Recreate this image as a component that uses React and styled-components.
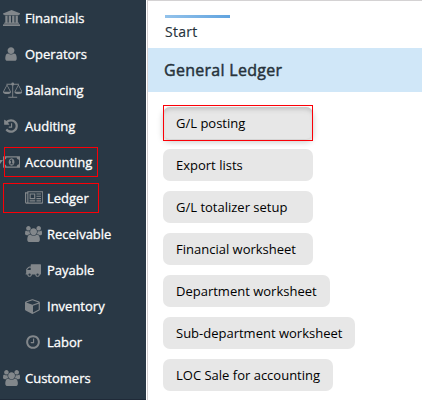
import React from 'react';
import styled, { createGlobalStyle } from 'styled-components';

const GlobalStyle = createGlobalStyle`
  * { box-sizing: border-box; }
  body { margin: 0; background: #fff; font-family: "Open Sans", sans-serif; overflow: hidden; }
`;

const Page = styled.div`
  display: flex;
  width: 422px;
  height: 400px;
  overflow: hidden;
`;

const Sidebar = styled.nav`
  position: relative;
  flex: none;
  width: 146px;
  height: 400px;
  background: #293845;
  border-bottom: 1px solid #1f2a38;
  overflow: hidden;
`;

const NavItem = styled.a`
  display: flex;
  align-items: center;
  height: 36px;
  padding-left: ${(p) => (p.$nested ? 25 : 3)}px;
  color: #fff;
  font-size: 13px;
  font-weight: 400;
  line-height: 18px;
  white-space: nowrap;
`;

const IconSlot = styled.span`
  display: flex;
  flex: none;
  align-items: center;
  width: 22px;
  height: 18px;
  color: #82878b;
`;

const Label = styled.span`
  -webkit-text-stroke: 0.3px #fff;
`;

const Highlight = styled.span`
  position: absolute;
  left: ${(p) => p.$x}px;
  top: ${(p) => p.$y}px;
  width: ${(p) => p.$w}px;
  height: ${(p) => p.$h}px;
  border: 1px solid #fb0007;
  pointer-events: none;
`;

const Caret = styled.span`
  position: absolute;
  left: -3px;
  top: 160px;
  border: 3px solid transparent;
  border-top: 4px solid #80868b;
`;

const Main = styled.main`
  flex: 1;
  height: 400px;
  margin-left: 1px;
  border-top: 1px solid #d4d2d3;
  border-left: 1px solid #d4cfd0;
  background: #fff;
`;

const TabBar = styled.div`
  height: 47px;
  padding: 14px 0 0 17px;
`;

const Tab = styled.div`
  width: 65px;
  border-top: 3px solid;
  border-image: linear-gradient(90deg, #94c3eb, #60a3df) 1;
  padding-top: 4px;
  color: #26323b;
  font-size: 14px;
  line-height: 19px;
  letter-spacing: 0.3px;
  -webkit-text-stroke: 0.15px #26323b;
`;

const Heading = styled.h1`
  display: flex;
  align-items: center;
  height: 44px;
  margin: 0;
  padding: 0 0 1px 16px;
  background: #d0e7f8;
  color: #26323b;
  font-size: 16px;
  font-weight: 400;
  letter-spacing: 0.28px;
  -webkit-text-stroke: 0.45px #26323b;
`;

const Actions = styled.div`
  display: flex;
  flex-direction: column;
  align-items: flex-start;
  gap: 10px;
  padding: 15px 0 0 15px;
`;

const Action = styled.button`
  position: relative;
  height: 32px;
  min-width: 150px;
  padding: 0 13px;
  border: 0;
  border-radius: 7px;
  background: #e7e7e7;
  color: #000;
  font: 400 13px/18px "Open Sans", sans-serif;
  letter-spacing: 0;
  text-align: left;
  white-space: nowrap;
  box-shadow: ${(p) => (p.$active ? 'inset 0 4px 5px -2px #bdbdbd, 0 3px 6px rgba(0,0,0,.22)' : 'none')};
`;

const Glyph = styled.svg`
  display: block;
  flex: none;
  fill: currentColor;
`;

const icons = {
  bank: { w: 1920, d: 'M960 0l960 384v128h-128q0 26-20.5 45t-48.5 19h-1526q-28 0-48.5-19t-20.5-45h-128v-128zM256 640h256v768h128v-768h256v768h128v-768h256v768h128v-768h256v768h59q28 0 48.5 19t20.5 45v64h-1664v-64q0-26 20.5-45t48.5-19h59zM1851 1600q28 0 48.5 19t20.5 45v128h-1920v-128q0-26 20.5-45t48.5-19z' },
  user: { w: 1792, d: 'M1536 1399q0 109-62.5 187t-150.5 78h-854q-88 0-150.5-78t-62.5-187q0-85 8.5-160.5t31.5-152 58.5-131 94-89 134.5-34.5q131 128 313 128t313-128q76 0 134.5 34.5t94 89 58.5 131 31.5 152 8.5 160.5zm-256-887q0 159-112.5 271.5t-271.5 112.5-271.5-112.5-112.5-271.5 112.5-271.5 271.5-112.5 271.5 112.5 112.5 271.5z' },
  scale: { w: 2176, d: 'M384 192h540q20-128 164-128t164 128h540v110h-540q-20 70-112 90v1270h448v110h-1000v-110h448v-1270q-92-20-112-90h-540zM448 256l448 832q0 256-448 256t-448-256zM448 420l-350 668h700zM1728 256l448 832q0 256-448 256t-448-256zM1728 420l-350 668h700z' },
  history: { w: 1792, d: 'M1664 896q0 156-61 298t-164 245-245 164-298 61q-172 0-327-72.5t-264-204.5q-7-10-6.5-22.5t8.5-20.5l137-138q10-9 25-9 16 2 23 12 73 95 179 147t225 52q104 0 198.5-40.5t163.5-109.5 109.5-163.5 40.5-198.5-40.5-198.5-109.5-163.5-163.5-109.5-198.5-40.5q-98 0-188 35.5t-160 101.5l137 138q31 30 14 69-17 40-59 40h-448q-26 0-45-19t-19-45v-448q0-42 40-59 39-17 69 14l130 129q107-101 244.5-156.5t284.5-55.5q156 0 298 61t245 164 164 245 61 298zm-640-288v448q0 14-9 23t-23 9h-320q-14 0-23-9t-9-23v-64q0-14 9-23t23-9h224v-352q0-14 9-23t23-9h64q14 0 23 9t9 23z' },
  money: { w: 1920, d: 'M768 1152h384v-96h-128v-448h-114l-148 137 77 80q42-37 55-57h2v288h-128v96zm512-256q0 70-21 142t-59.5 134-101.5 101-138 39-138-39-101.5-101-59.5-134-21-142 21-142 59.5-134 101.5-101 138-39 138 39 101.5 101 59.5 134 21 142zm512 256v-512q-106 0-181-75t-75-181h-1152q0 106-75 181t-181 75v512q106 0 181 75t75 181h1152q0-106 75-181t181-75zm128-832v1152q0 26-19 45t-45 19h-1792q-26 0-45-19t-19-45v-1152q0-26 19-45t45-19h1792q26 0 45 19t19 45z' },
  news: { w: 2048, d: 'M1024 512h-384v384h384v-384zm128 640v128h-640v-128h640zm0-768v640h-640v-640h640zm640 768v128h-512v-128h512zm0-256v128h-512v-128h512zm0-256v128h-512v-128h512zm0-256v128h-512v-128h512zm-1536 960v-960h-128v960q0 26 19 45t45 19 45-19 19-45zm1664 0v-1088h-1536v1088q0 33-11 64h1483q26 0 45-19t19-45zm128-1216v1216q0 80-56 136t-136 56h-1664q-80 0-136-56t-56-136v-1088h256v-128h1792z' },
  users: { w: 1920, d: 'M593 896q-162 5-265 128h-134q-82 0-138-40.5t-56-118.5q0-353 124-353 6 0 43.5 21t97.5 42.5 119 21.5q67 0 133-23-5 37-5 66 0 143 81 256zM1664 1533q0 120-73 189.5t-194 69.5h-874q-121 0-194-69.5t-73-189.5q0-53 3.5-103.5t14-109 26.5-108.5 43-97.5 62-81 85.5-53.5 111.5-20q10 0 43 21.5t73 48 107 48 135 21.5 135-21.5 107-48 73-48 43-21.5q61 0 111.5 20t85.5 53.5 62 81 43 97.5 26.5 108.5 14 109 3.5 103.5zM640 256q0 106-75 181t-181 75-181-75-75-181 75-181 181-75 181 75 75 181zM1344 640q0 159-112.5 271.5t-271.5 112.5-271.5-112.5-112.5-271.5 112.5-271.5 271.5-112.5 271.5 112.5 112.5 271.5zM1920 865q0 78-56 118.5t-138 40.5h-134q-103-123-265-128 81-113 81-256 0-29-5-66 66 23 133 23 59 0 119-21.5t97.5-42.5 43.5-21q124 0 124 353zM1792 256q0 106-75 181t-181 75-181-75-75-181 75-181 181-75 181 75 75 181z' },
  truck: { w: 1792, d: 'M640 1408q0-52-38-90t-90-38-90 38-38 90 38 90 90 38 90-38 38-90zm-384-512h384v-256h-158q-13 0-22 9l-195 195q-9 9-9 22v30zm1280 512q0-52-38-90t-90-38-90 38-38 90 38 90 90 38 90-38 38-90zm256-1088v1024q0 15-4 26.5t-13.5 18.5-16.5 11.5-23.5 6-22.5 2-25.5 0-22.5-.5q0 106-75 181t-181 75-181-75-75-181h-384q0 106-75 181t-181 75-181-75-75-181h-64q-3 0-22.5.5t-25.5 0-22.5-2-23.5-6-16.5-11.5-13.5-18.5-4-26.5q0-26 19-45t45-19v-320q0-8-.5-35t0-38 2.5-34.5 6.5-37 14-30.5 22.5-30l198-198q19-19 50.5-32t58.5-13h160v-192q0-26 19-45t45-19h1024q26 0 45 19t19 45z' },
  cube: { w: 1664, d: 'M896 1629l640-349v-636l-640 233v752zm-64-865l698-254-698-254-698 254zm832-252v768q0 35-18 65t-49 47l-704 384q-28 16-61 16t-61-16l-704-384q-31-17-49-47t-18-65v-768q0-40 23-73t61-47l704-256q22-8 44-8t44 8l704 256q38 14 61 47t23 73z' },
  clock: { w: 1792, d: 'M1024 544v448q0 14-9 23t-23 9h-320q-14 0-23-9t-9-23v-64q0-14 9-23t23-9h224v-352q0-14 9-23t23-9h64q14 0 23 9t9 23zm416 352q0-148-73-273t-198-198-273-73-273 73-198 198-73 273 73 273 198 198 273 73 273-73 198-198 73-273zm224 0q0 209-103 385.5t-279.5 279.5-385.5 103-385.5-103-279.5-279.5-103-385.5 103-385.5 279.5-279.5 385.5-103 385.5 103 279.5 279.5 103 385.5z' },
};

function Icon({ name }) {
  const { w, d } = icons[name];
  return (
    <Glyph width={(w / 1792) * 16} height={16} viewBox={`0 0 ${w} 1792`}>
      <path d={d} fillRule="evenodd" />
    </Glyph>
  );
}

const navigation = [
  { label: 'Financials', icon: 'bank' },
  { label: 'Operators', icon: 'user' },
  { label: 'Balancing', icon: 'scale' },
  { label: 'Auditing', icon: 'history' },
  { label: 'Accounting', icon: 'money' },
  { label: 'Ledger', icon: 'news', nested: true },
  { label: 'Receivable', icon: 'users', nested: true },
  { label: 'Payable', icon: 'truck', nested: true },
  { label: 'Inventory', icon: 'cube', nested: true },
  { label: 'Labor', icon: 'clock', nested: true },
  { label: 'Customers', icon: 'users' },
];

const actions = [
  'G/L posting',
  'Export lists',
  'G/L totalizer setup',
  'Financial worksheet',
  'Department worksheet',
  'Sub-department worksheet',
  'LOC Sale for accounting',
];

export default function App() {
  return (
    <Page>
      <GlobalStyle />
      <Sidebar>
        {navigation.map((item) => (
          <NavItem key={item.label} $nested={item.nested}>
            <IconSlot><Icon name={item.icon} /></IconSlot>
            <Label>{item.label}</Label>
          </NavItem>
        ))}
        <Caret />
        <Highlight $x={4} $y={147} $w={94} $h={30} />
        <Highlight $x={3} $y={183} $w={96} $h={30} />
      </Sidebar>
      <Main>
        <TabBar><Tab>Start</Tab></TabBar>
        <Heading>General Ledger</Heading>
        <Actions>
          {actions.map((label, i) => (
            <Action key={label} $active={i === 0}>
              {label}
              {i === 0 && <Highlight $x={0} $y={-2} $w={150} $h={36} />}
            </Action>
          ))}
        </Actions>
      </Main>
    </Page>
  );
}
